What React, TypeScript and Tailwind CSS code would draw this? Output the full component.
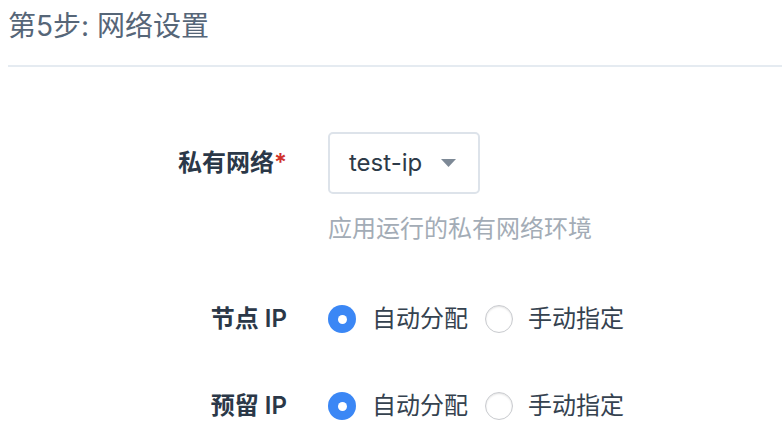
import { useState } from 'react'

type RadioRowProp = {
  label: string
  value: string
  onChange: (v: string) => void
}

const options = ['自动分配', '手动指定']

function Radio({ checked }: { checked: boolean }) {
  return checked ? (
    <span className="flex h-[28px] w-[28px] shrink-0 items-center justify-center rounded-full bg-[#3b87f5]">
      <span className="h-[9px] w-[9px] rounded-full bg-white"></span>
    </span>
  ) : (
    <span className="h-[28px] w-[28px] shrink-0 rounded-full border border-[#c9cbcf] bg-white shadow-[inset_0_1px_2px_rgba(0,0,0,0.12)]"></span>
  )
}

function RadioRow({ label, value, onChange }: RadioRowProp) {
  return (
    <>
      <div className="text-right text-[24px] font-semibold leading-[32px] text-[#2b3848]">{label}</div>
      <div className="flex items-center">
        {options.map((opt, i) => (
          <label
            key={opt}
            className={
              i === 0
                ? 'flex cursor-pointer items-center gap-[16px] pr-[17px]'
                : 'flex cursor-pointer items-center gap-[15px]'
            }
            onClick={() => onChange(opt)}>
            <Radio checked={value === opt} />
            <span className="text-[24px] leading-[32px] text-[#35424f]">{opt}</span>
          </label>
        ))}
      </div>
    </>
  )
}

export default function App() {
  const [nodeIp, setNodeIp] = useState('自动分配')
  const [reservedIp, setReservedIp] = useState('自动分配')

  return (
    <div
      className="h-[446px] w-[782px] bg-white pl-[8px]"
      style={{ fontFamily: 'Inter, "Noto Sans CJK SC", sans-serif' }}>
      <div className="pt-[6px] text-[28px] leading-[40px] text-[#566678]">第5步: 网络设置</div>
      <div className="mt-[19px] h-[2px] bg-[#e5ebf1]"></div>

      <div className="mt-[65px] grid grid-cols-[279px_1fr] gap-x-[41px]">
        <div className="flex h-[62px] items-center justify-end text-[24px] font-semibold text-[#2b3848]">
          私有网络<span className="text-[#d0302b]">*</span>
        </div>
        <div>
          <button className="flex h-[62px] w-[152px] items-center justify-between rounded-[5px] border-2 border-[#dde3ea] bg-white pl-[19px] pr-[22px]">
            <span className="text-[24px] text-[#2d3a48]">test-ip</span>
            <svg width="15" height="8" viewBox="0 0 15 8">
              <path d="M0 0h15L7.5 8z" fill="#7d8996" />
            </svg>
          </button>
          <div className="mt-[19px] text-[24px] leading-[32px] text-[#a3acb6]">应用运行的私有网络环境</div>
        </div>

        <div className="col-span-2 h-[58px]"></div>
        <RadioRow label="节点 IP" value={nodeIp} onChange={setNodeIp} />
        <div className="col-span-2 h-[55px]"></div>
        <RadioRow label="预留 IP" value={reservedIp} onChange={setReservedIp} />
      </div>
    </div>
  )
}
